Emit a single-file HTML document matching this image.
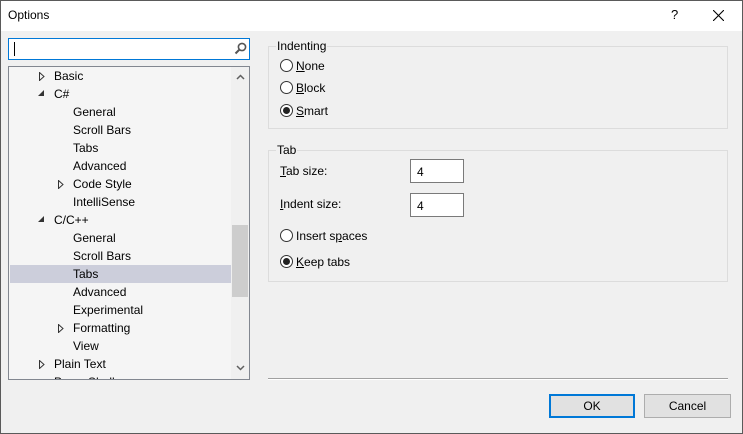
<!DOCTYPE html>
<html><head><style>
*{box-sizing:border-box;margin:0;padding:0}
body{width:743px;height:434px;overflow:hidden;font-family:"Liberation Sans",sans-serif;font-size:12px;color:#000;background:#f0f0f0;position:relative}
.win{position:absolute;left:0;top:0;width:743px;height:434px;background:#f0f0f0}
.frame{position:absolute;left:0;top:0;width:743px;height:434px;border:1px solid #5a5a5a;pointer-events:none}
.title{position:absolute;left:0;top:0;width:743px;height:31px;background:#fff}
.a{position:absolute;white-space:nowrap}
.tree{position:absolute;left:8px;top:66px;width:242px;height:314px;border:1px solid #828790;background:#f5f5f5;overflow:hidden}
.row{position:absolute;left:1px;width:221px;height:18px;line-height:18px}
.sel{background:#cccedb}
.grp{position:absolute;border:1px solid #dcdcdc}
.leg{position:absolute;background:#f0f0f0;padding:0 1px}
.rad{position:absolute;width:13px;height:13px;border:1px solid #333;border-radius:50%;background:#fff}
.rad.on::after{content:"";position:absolute;left:2px;top:2px;width:7px;height:7px;border-radius:50%;background:#222}
.inp{position:absolute;width:54px;height:24px;border:1px solid #7a7a7a;background:#fff;padding:5px 6px}
.btn{position:absolute;height:24px;background:#e1e1e1;border:1px solid #adadad;text-align:center;line-height:22px}
u{text-decoration:underline}
</style></head><body>
<div class="win">
<div class="title"></div>
<div class="a" style="left:8px;top:8px;font-size:12px">Options</div>
<div class="a" style="left:671px;top:7px;font-size:13px">?</div>
<svg class="a" style="left:713px;top:10px" width="11" height="11"><path d="M0 0L11 11M11 0L0 11" stroke="#000" stroke-width="1.1"/></svg>

<div class="a" style="left:8px;top:38px;width:242px;height:22px;border:1px solid #0078d7;background:#fff"></div>
<div class="a" style="left:14px;top:42px;width:1px;height:14px;background:#000"></div>
<svg class="a" style="left:234px;top:42px" width="13" height="13"><circle cx="8" cy="5" r="3.6" fill="none" stroke="#555" stroke-width="1.6"/><path d="M5.5 7.5L1.5 11.5" stroke="#555" stroke-width="2"/></svg>

<div class="tree">
<div class="row" style="top:0"><svg class="a" style="left:29px;top:5px" width="6" height="9"><path d="M0.5 0.5L5 4.5L0.5 8.5Z" fill="none" stroke="#333"/></svg><span class="a" style="left:44px">Basic</span></div>
<div class="row" style="top:18px"><svg class="a" style="left:28px;top:5px" width="7" height="7"><path d="M6 0L6 6L0 6Z" fill="#333"/></svg><span class="a" style="left:44px">C#</span></div>
<div class="row" style="top:36px"><span class="a" style="left:63px">General</span></div>
<div class="row" style="top:54px"><span class="a" style="left:63px">Scroll Bars</span></div>
<div class="row" style="top:72px"><span class="a" style="left:63px">Tabs</span></div>
<div class="row" style="top:90px"><span class="a" style="left:63px">Advanced</span></div>
<div class="row" style="top:108px"><svg class="a" style="left:48px;top:5px" width="6" height="9"><path d="M0.5 0.5L5 4.5L0.5 8.5Z" fill="none" stroke="#333"/></svg><span class="a" style="left:63px">Code Style</span></div>
<div class="row" style="top:126px"><span class="a" style="left:63px">IntelliSense</span></div>
<div class="row" style="top:144px"><svg class="a" style="left:28px;top:5px" width="7" height="7"><path d="M6 0L6 6L0 6Z" fill="#333"/></svg><span class="a" style="left:44px">C/C++</span></div>
<div class="row" style="top:162px"><span class="a" style="left:63px">General</span></div>
<div class="row" style="top:180px"><span class="a" style="left:63px">Scroll Bars</span></div>
<div class="row sel" style="top:198px"><span class="a" style="left:63px">Tabs</span></div>
<div class="row" style="top:216px"><span class="a" style="left:63px">Advanced</span></div>
<div class="row" style="top:234px"><span class="a" style="left:63px">Experimental</span></div>
<div class="row" style="top:252px"><svg class="a" style="left:48px;top:5px" width="6" height="9"><path d="M0.5 0.5L5 4.5L0.5 8.5Z" fill="none" stroke="#333"/></svg><span class="a" style="left:63px">Formatting</span></div>
<div class="row" style="top:270px"><span class="a" style="left:63px">View</span></div>
<div class="row" style="top:288px"><svg class="a" style="left:29px;top:5px" width="6" height="9"><path d="M0.5 0.5L5 4.5L0.5 8.5Z" fill="none" stroke="#333"/></svg><span class="a" style="left:44px">Plain Text</span></div>
<div class="row" style="top:306px"><span class="a" style="left:44px">PowerShell</span></div>
<div class="a" style="left:222px;top:0;width:18px;height:312px;background:#f0f0f0"></div>
<div class="a" style="left:223px;top:158px;width:16px;height:72px;background:#cdcdcd"></div>
<svg class="a" style="left:227px;top:7px" width="9" height="6"><path d="M1 5L4.5 1.5L8 5" fill="none" stroke="#606060" stroke-width="1.5"/></svg>
<svg class="a" style="left:227px;top:298px" width="9" height="6"><path d="M1 1L4.5 4.5L8 1" fill="none" stroke="#606060" stroke-width="1.5"/></svg>
</div>

<div class="grp" style="left:268px;top:46px;width:460px;height:83px"></div>
<div class="leg" style="left:276px;top:39px">Indenting</div>
<div class="rad" style="left:280px;top:59px"></div><div class="a" style="left:296px;top:59px"><u>N</u>one</div>
<div class="rad" style="left:280px;top:81px"></div><div class="a" style="left:296px;top:81px"><u>B</u>lock</div>
<div class="rad on" style="left:280px;top:104px"></div><div class="a" style="left:296px;top:104px"><u>S</u>mart</div>

<div class="grp" style="left:268px;top:150px;width:460px;height:132px"></div>
<div class="leg" style="left:276px;top:143px">Tab</div>
<div class="a" style="left:280px;top:164px"><u>T</u>ab size:</div>
<div class="inp" style="left:410px;top:159px">4</div>
<div class="a" style="left:280px;top:197px"><u>I</u>ndent size:</div>
<div class="inp" style="left:410px;top:193px">4</div>
<div class="rad" style="left:280px;top:229px"></div><div class="a" style="left:296px;top:229px">Insert s<u>p</u>aces</div>
<div class="rad on" style="left:280px;top:255px"></div><div class="a" style="left:296px;top:255px"><u>K</u>eep tabs</div>

<div class="a" style="left:268px;top:378px;width:460px;height:1px;background:#a0a0a0"></div>
<div class="a" style="left:268px;top:379px;width:460px;height:1px;background:#fff"></div>
<div class="btn" style="left:549px;top:394px;width:86px;border:2px solid #0078d7;line-height:20px">OK</div>
<div class="btn" style="left:644px;top:394px;width:87px">Cancel</div>
</div>
<div class="frame"></div>
</body></html>
